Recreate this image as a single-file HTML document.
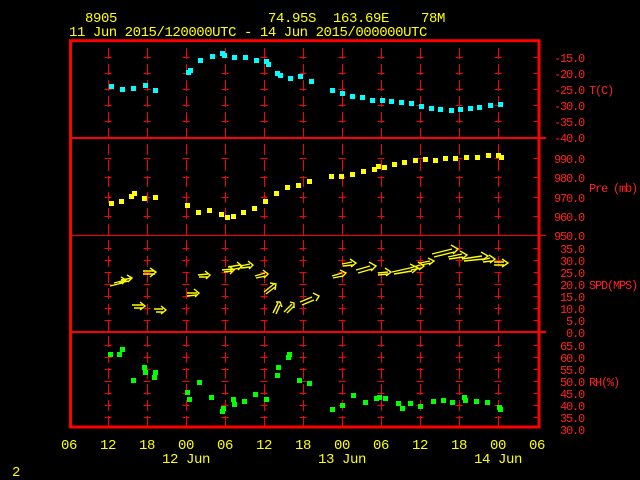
<!DOCTYPE html>
<html><head><meta charset="utf-8"><style>
html,body{margin:0;padding:0;background:#000;width:640px;height:480px;overflow:hidden}
svg{display:block}
.y{fill:#ffff00;font-family:"Liberation Mono",monospace;font-size:14px;letter-spacing:-0.4px}
.r{fill:#ff2020;font-family:"Liberation Mono",monospace;font-size:12px;letter-spacing:-1.2px}
</style></head><body>
<svg width="640" height="480" viewBox="0 0 640 480" xmlns="http://www.w3.org/2000/svg">
<text class="y" x="85" y="22">8905</text>
<text class="y" x="268" y="22">74.95S</text>
<text class="y" x="333" y="22">163.69E</text>
<text class="y" x="421" y="22">78M</text>
<text class="y" x="69" y="36" textLength="358">11 Jun 2015/120000UTC - 14 Jun 2015/000000UTC</text>
<g stroke="#ff0000" stroke-width="1" stroke-dasharray="11 5" fill="none">
<path d="M108.5 48V428M147.5 48V428M186.5 48V428M225.5 48V428M264.5 48V428M303.5 48V428M342.5 48V428M381.5 48V428M420.5 48V428M459.5 48V428M498.5 48V428"/>
</g>
<g stroke="#ff0000" stroke-width="1" stroke-dasharray="7 32" fill="none">
<path d="M104.5 57.5H545M104.5 73.5H545M104.5 89.5H545M104.5 105.5H545M104.5 121.5H545
M104.5 158.5H545M104.5 177.5H545M104.5 197.5H545M104.5 216.5H545
M104.5 248.5H545M104.5 260.5H545M104.5 272.5H545M104.5 284.5H545M104.5 296.5H545M104.5 308.5H545M104.5 320.5H545
M104.5 345.5H545M104.5 357.5H545M104.5 369.5H545M104.5 381.5H545M104.5 393.5H545M104.5 405.5H545M104.5 417.5H545"/>
</g>
<path d="M70 138H546M70 332H546" stroke="#ff0000" stroke-width="2"/>
<path d="M70 235.5H546" stroke="#ff0000" stroke-width="1"/>
<rect x="70.5" y="40.7" width="468.5" height="386.3" fill="none" stroke="#ff0000" stroke-width="3"/>
<g class="r" text-anchor="end">
<text x="584" y="62">-15.0</text><text x="584" y="78">-20.0</text><text x="584" y="94">-25.0</text><text x="584" y="110">-30.0</text><text x="584" y="126">-35.0</text><text x="584" y="142">-40.0</text>
<text x="584" y="163">990.0</text><text x="584" y="182">980.0</text><text x="584" y="202">970.0</text><text x="584" y="221">960.0</text><text x="584" y="240">950.0</text>
<text x="584" y="253">35.0</text><text x="584" y="265">30.0</text><text x="584" y="277">25.0</text><text x="584" y="289">20.0</text><text x="584" y="301">15.0</text><text x="584" y="313">10.0</text><text x="584" y="325">5.0</text><text x="584" y="337">0.0</text>
<text x="584" y="350">65.0</text><text x="584" y="362">60.0</text><text x="584" y="374">55.0</text><text x="584" y="386">50.0</text><text x="584" y="398">45.0</text><text x="584" y="410">40.0</text><text x="584" y="422">35.0</text><text x="584" y="434">30.0</text>
</g>
<g class="r">
<text x="589" y="94">T(C)</text>
<text x="589" y="192">Pre (mb)</text>
<text x="589" y="289">SPD(MPS)</text>
<text x="589" y="386">RH(%)</text>
</g>
<g class="y" text-anchor="middle">
<text x="69" y="449">06</text><text x="108" y="449">12</text><text x="147" y="449">18</text><text x="186" y="449">00</text><text x="225" y="449">06</text><text x="264" y="449">12</text><text x="303" y="449">18</text><text x="342" y="449">00</text><text x="381" y="449">06</text><text x="420" y="449">12</text><text x="459" y="449">18</text><text x="498" y="449">00</text><text x="537" y="449">06</text>
<text x="186" y="463">12 Jun</text><text x="342" y="463">13 Jun</text><text x="498" y="463">14 Jun</text>
</g>
<text class="y" x="12" y="476">2</text>
<g fill="#00ffff">
<rect x="109" y="84" width="5" height="5"/><rect x="120" y="87" width="5" height="5"/><rect x="131" y="86" width="5" height="5"/><rect x="143" y="83" width="5" height="5"/><rect x="153" y="88" width="5" height="5"/>
<rect x="186" y="70" width="5" height="5"/><rect x="188" y="68" width="5" height="5"/><rect x="198" y="58" width="5" height="5"/><rect x="210" y="54" width="5" height="5"/><rect x="220" y="51" width="5" height="5"/><rect x="222" y="53" width="5" height="5"/><rect x="232" y="55" width="5" height="5"/><rect x="243" y="55" width="5" height="5"/><rect x="254" y="58" width="5" height="5"/><rect x="264" y="59" width="5" height="5"/><rect x="266" y="62" width="5" height="5"/><rect x="275" y="71" width="5" height="5"/><rect x="278" y="73" width="5" height="5"/><rect x="288" y="76" width="5" height="5"/><rect x="298" y="74" width="5" height="5"/><rect x="309" y="79" width="5" height="5"/>
<rect x="330" y="88" width="5" height="5"/><rect x="340" y="91" width="5" height="5"/><rect x="350" y="94" width="5" height="5"/><rect x="360" y="95" width="5" height="5"/><rect x="370" y="98" width="5" height="5"/><rect x="380" y="98" width="5" height="5"/><rect x="389" y="99" width="5" height="5"/><rect x="399" y="100" width="5" height="5"/><rect x="409" y="101" width="5" height="5"/><rect x="419" y="104" width="5" height="5"/><rect x="429" y="106" width="5" height="5"/><rect x="438" y="107" width="5" height="5"/><rect x="449" y="108" width="5" height="5"/><rect x="458" y="107" width="5" height="5"/><rect x="468" y="106" width="5" height="5"/><rect x="477" y="105" width="5" height="5"/><rect x="488" y="103" width="5" height="5"/><rect x="498" y="102" width="5" height="5"/>
</g>
<g fill="#ffff00">
<rect x="109" y="201" width="5" height="5"/><rect x="119" y="199" width="5" height="5"/><rect x="129" y="194" width="5" height="5"/><rect x="132" y="191" width="5" height="5"/><rect x="142" y="196" width="5" height="5"/><rect x="153" y="195" width="5" height="5"/>
<rect x="185" y="203" width="5" height="5"/><rect x="196" y="210" width="5" height="5"/><rect x="207" y="208" width="5" height="5"/><rect x="219" y="212" width="5" height="5"/><rect x="225" y="215" width="5" height="5"/><rect x="231" y="214" width="5" height="5"/><rect x="241" y="210" width="5" height="5"/><rect x="252" y="206" width="5" height="5"/><rect x="263" y="199" width="5" height="5"/><rect x="274" y="191" width="5" height="5"/><rect x="285" y="185" width="5" height="5"/><rect x="296" y="183" width="5" height="5"/><rect x="307" y="179" width="5" height="5"/>
<rect x="329" y="174" width="5" height="5"/><rect x="339" y="174" width="5" height="5"/><rect x="350" y="172" width="5" height="5"/><rect x="361" y="169" width="5" height="5"/><rect x="372" y="167" width="5" height="5"/><rect x="376" y="164" width="5" height="5"/><rect x="382" y="165" width="5" height="5"/><rect x="392" y="162" width="5" height="5"/><rect x="402" y="160" width="5" height="5"/><rect x="413" y="158" width="5" height="5"/><rect x="423" y="157" width="5" height="5"/><rect x="433" y="158" width="5" height="5"/><rect x="443" y="156" width="5" height="5"/><rect x="453" y="156" width="5" height="5"/><rect x="464" y="155" width="5" height="5"/><rect x="475" y="155" width="5" height="5"/><rect x="486" y="153" width="5" height="5"/><rect x="496" y="153" width="5" height="5"/><rect x="499" y="155" width="5" height="5"/>
</g>
<g stroke="#ffff00" stroke-width="1.4" fill="none">
<path d="M110 286L122 283M114 283L126 280M121 277L126 280L122 284"/>
<path d="M119 283L129 281M121 280L132 278M127 275L132 278L128 282"/>
<path d="M143 271L155 271M143 274L155 274M150 268L156 272L150 277"/>
<path d="M132 305L143 305M134 308L143 308M140 302L145 306L140 310"/>
<path d="M154 309L163 309M156 312L163 312M161 306L166 310L161 314"/>
<path d="M187 293L197 293M187 296L197 295M194 289L199 293L195 297"/>
<path d="M198 275L208 274M199 277L208 277M205 271L210 275L206 279"/>
<path d="M222 270L232 269M224 272L232 271M229 266L234 270L230 274"/>
<path d="M228 267L240 265M230 270L240 268M237 262L242 266L238 270"/>
<path d="M240 266L250 264M241 268L250 267M248 261L253 265L249 269"/>
<path d="M255 276L265 273M256 278L266 276M263 270L268 274L264 278"/>
<path d="M264 292L274 284M266 294L275 287M270 283L276 284L275 290"/>
<path d="M273 313L278 303M276 314L280 305M276 302L280 302L282 307"/>
<path d="M284 312L292 304M287 313L294 306M290 302L294 303L294 308"/>
<path d="M300 302L312 297M302 305L314 300M313 293L319 296L316 301"/>
<path d="M332 276L342 273M333 278L343 276M340 270L346 273L342 277"/>
<path d="M342 264L352 262M343 266L353 265M350 259L356 263L351 267"/>
<path d="M356 270L370 266M358 273L372 269M369 262L376 266L371 271"/>
<path d="M378 273L388 272M378 275L388 274M385 268L391 272L386 276"/>
<path d="M392 272L410 268M394 274L412 271M410 264L418 268L412 273"/>
<path d="M410 268L420 265M411 270L421 268M418 262L424 266L419 270"/>
<path d="M420 263L430 261M421 265L431 263M428 258L434 261L429 265"/>
<path d="M432 254L452 249M434 257L454 252M451 245L458 249L453 254"/>
<path d="M448 257L462 254M449 259L463 257M460 251L467 255L462 259"/>
<path d="M462 259L482 256M464 261L484 259M481 252L488 256L483 260"/>
<path d="M482 260L490 258M483 262L492 261M489 255L495 259L490 263"/>
<path d="M494 262L504 262M494 265L504 265M502 259L508 263L502 267"/>
</g>
<g fill="#00ff00">
<rect x="108" y="352" width="5" height="5"/><rect x="117" y="352" width="5" height="5"/><rect x="120" y="347" width="5" height="5"/><rect x="131" y="378" width="5" height="5"/><rect x="142" y="365" width="5" height="5"/><rect x="143" y="370" width="5" height="5"/><rect x="153" y="370" width="5" height="5"/><rect x="152" y="375" width="5" height="5"/>
<rect x="185" y="390" width="5" height="5"/><rect x="187" y="397" width="5" height="5"/><rect x="197" y="380" width="5" height="5"/><rect x="209" y="395" width="5" height="5"/><rect x="220" y="409" width="5" height="5"/><rect x="221" y="406" width="5" height="5"/><rect x="231" y="397" width="5" height="5"/><rect x="232" y="402" width="5" height="5"/><rect x="242" y="399" width="5" height="5"/><rect x="253" y="392" width="5" height="5"/><rect x="264" y="397" width="5" height="5"/><rect x="275" y="373" width="5" height="5"/><rect x="276" y="365" width="5" height="5"/><rect x="286" y="355" width="5" height="5"/><rect x="287" y="352" width="5" height="5"/><rect x="297" y="378" width="5" height="5"/><rect x="307" y="381" width="5" height="5"/>
<rect x="330" y="407" width="5" height="5"/><rect x="340" y="403" width="5" height="5"/><rect x="351" y="393" width="5" height="5"/><rect x="363" y="400" width="5" height="5"/><rect x="374" y="396" width="5" height="5"/><rect x="377" y="395" width="5" height="5"/><rect x="383" y="396" width="5" height="5"/><rect x="396" y="401" width="5" height="5"/><rect x="400" y="406" width="5" height="5"/><rect x="408" y="401" width="5" height="5"/><rect x="418" y="404" width="5" height="5"/><rect x="431" y="399" width="5" height="5"/><rect x="441" y="398" width="5" height="5"/><rect x="450" y="400" width="5" height="5"/><rect x="462" y="395" width="5" height="5"/><rect x="463" y="398" width="5" height="5"/><rect x="474" y="399" width="5" height="5"/><rect x="485" y="400" width="5" height="5"/><rect x="497" y="405" width="5" height="5"/><rect x="498" y="407" width="5" height="5"/>
</g>
</svg>
</body></html>
